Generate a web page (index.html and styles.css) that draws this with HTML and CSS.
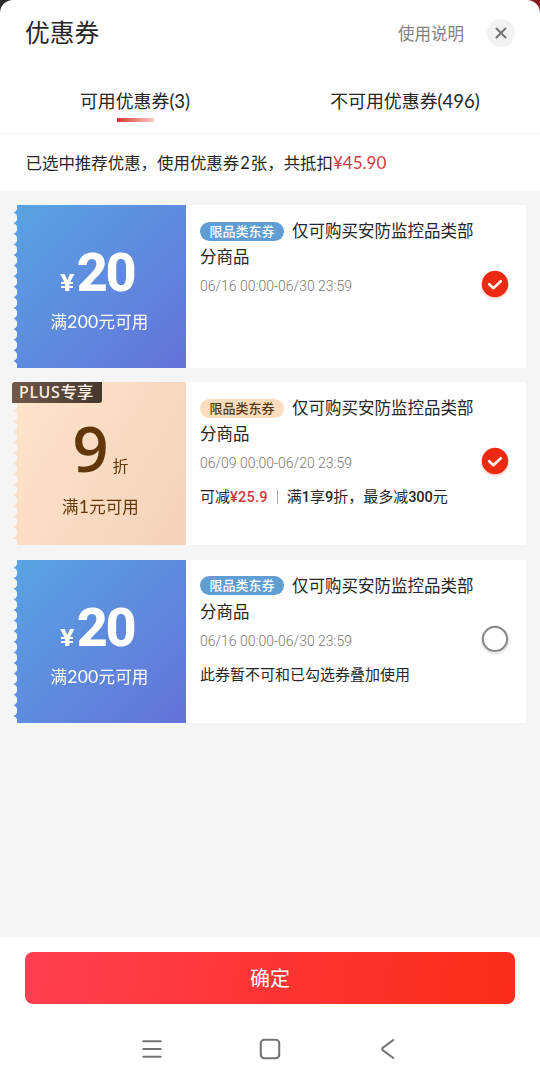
FILE: index.html
```html
<!DOCTYPE html>
<html lang="zh-CN">
<head>
<meta charset="utf-8">
<title>优惠券</title>
<link rel="stylesheet" href="styles.css">
</head>
<body>
<div class="sheet">
  <header class="header">
    <h1 class="title">优惠券</h1>
    <span class="help">使用说明</span>
    <svg class="close" width="28" height="28" viewBox="0 0 28 28"><circle cx="14" cy="14" r="14" fill="#f2f2f2"/><path d="M9.5 9.5l9 9M18.5 9.5l-9 9" stroke="#777" stroke-width="2.1" stroke-linecap="round"/></svg>
  </header>
  <nav class="tabs">
    <div class="tab active"><span>可用优惠券<b class="num">(3)</b></span></div>
    <div class="tab other"><span>不可用优惠券<b class="num">(496)</b></span></div>
  </nav>
  <p class="summary">已选中推荐优惠，使用优惠券<span class="count">2</span>张，共抵扣<span class="saved">¥45.90</span></p>
  <main class="list">
    <article class="card">
      <div class="face blue">
        <div class="amount"><span class="yen">¥</span><span class="value">20</span></div>
        <div class="cond">满<span class="n">200</span>元可用</div>
      </div>
      <div class="info">
        <div class="name"><span class="tag">限品类东券</span>仅可购买安防监控品类部<br>分商品</div>
        <div class="date">06/16 00:00-06/30 23:59</div>
      </div>
      <svg class="check" width="34" height="36" viewBox="0 0 34 36"><circle cx="17" cy="18.5" r="14" fill="#ffe1db"/><circle cx="17" cy="17" r="13.2" fill="#ec2a12"/><path d="M11.2 17.2l4.2 4 7.4-7" fill="none" stroke="#fff1e8" stroke-width="2.7" stroke-linecap="round" stroke-linejoin="round"/></svg>
    </article>
    <article class="card">
      <div class="face gold">
        <div class="amount"><span class="value">9</span><span class="unit">折</span></div>
        <div class="cond">满<span class="n">1</span>元可用</div>
      </div>
      <div class="plus"><span>PLUS</span>专享</div>
      <div class="info">
        <div class="name"><span class="tag tag-gold">限品类东券</span>仅可购买安防监控品类部<br>分商品</div>
        <div class="date">06/09 00:00-06/20 23:59</div>
        <div class="note">可减<b class="red">¥25.9</b><i class="bar"></i>满<b>1</b>享<b>9</b>折，最多减<b>300</b>元</div>
      </div>
      <svg class="check" width="34" height="36" viewBox="0 0 34 36"><circle cx="17" cy="18.5" r="14" fill="#ffe1db"/><circle cx="17" cy="17" r="13.2" fill="#ec2a12"/><path d="M11.2 17.2l4.2 4 7.4-7" fill="none" stroke="#fff1e8" stroke-width="2.7" stroke-linecap="round" stroke-linejoin="round"/></svg>
    </article>
    <article class="card">
      <div class="face blue">
        <div class="amount"><span class="yen">¥</span><span class="value">20</span></div>
        <div class="cond">满<span class="n">200</span>元可用</div>
      </div>
      <div class="info">
        <div class="name"><span class="tag">限品类东券</span>仅可购买安防监控品类部<br>分商品</div>
        <div class="date">06/16 00:00-06/30 23:59</div>
        <div class="note">此券暂不可和已勾选券叠加使用</div>
      </div>
      <svg class="check" width="34" height="36" viewBox="0 0 34 36"><circle cx="17" cy="18.5" r="13.2" fill="none" stroke="#e9e9e9" stroke-width="2"/><circle cx="17" cy="17" r="12.1" fill="#fff" stroke="#8a8a8a" stroke-width="2.1"/></svg>
    </article>
  </main>
  <footer class="footer">
    <button class="confirm">确定</button>
    <div class="sysnav">
      <svg width="22" height="22" viewBox="0 0 22 22"><path d="M2.3 3.2h17.4M2.3 11h17.4M2.3 18.7h17.4"/></svg>
      <svg width="22" height="22" viewBox="0 0 22 22"><rect x="1.8" y="1.8" width="18.4" height="18.4" rx="3.5"/></svg>
      <svg width="22" height="22" viewBox="0 0 22 22"><path d="M16.3 2L6 9.6Q4.4 11 6 12.4L16.3 20"/></svg>
    </div>
  </footer>
</div>
</body>
</html>
```
FILE: styles.css
```css
* { box-sizing: border-box; }
body {
  margin: 0;
  background: linear-gradient(90deg, #2b2b2d 0 50%, #851a20 50%);
  font-family: Lato, "Noto Sans CJK SC", sans-serif;
  color: #262626;
}
.sheet {
  width: 540px;
  height: 1083px;
  display: flex;
  flex-direction: column;
  background: #fff;
  border-radius: 13px 13px 0 0;
  overflow: hidden;
  white-space: nowrap;
}
.header {
  height: 68px;
  padding: 0 25px 2px 25px;
  display: flex;
  align-items: center;
}
.title { margin: 0; font-size: 24.7px; line-height: 36px; font-weight: 400; }
.help { margin-left: auto; margin-right: 23px; font-size: 16.5px; color: #828282; }
.close { display: block; }
.tabs {
  height: 66px;
  display: grid;
  grid-template-columns: 1fr 1fr;
  border-bottom: 1px solid #f8f8f8;
  font-size: 17.9px;
  line-height: 26px;
  text-align: center;
}
.tab { padding-top: 20px; }
.num { font-weight: 400; font-size: 18.6px; }
.active::after {
  content: "";
  display: block;
  width: 37px;
  height: 4px;
  margin: 4px auto 0;
  background: linear-gradient(90deg, #dc3328, #f6cdc8);
}
.summary {
  margin: 0;
  height: 57px;
  padding: 0 25.5px;
  font-size: 16.45px;
  line-height: 57px;
}
.count { padding: 0 1px; }
.saved { color: #cf3a40; font-size: 17px; }
.list {
  flex: none;
  height: 746px;
  padding: 14px 14px 0 13px;
  background: #f5f5f5;
  display: flex;
  flex-direction: column;
  gap: 14.4px;
}
.card {
  position: relative;
  flex: none;
  height: 163px;
  display: flex;
  background: linear-gradient(90deg, transparent 173px, #fff 173px);
}
.face {
  width: 172px;
  margin-left: 1px;
  display: flex;
  flex-direction: column;
  align-items: center;
  -webkit-mask: radial-gradient(3.2px 4.8px at 0 50%, transparent 90%, #000 105%) 0 -3px / 100% 10.6px repeat-y;
  mask: radial-gradient(3.2px 4.8px at 0 50%, transparent 90%, #000 105%) 0 -3px / 100% 10.6px repeat-y;
}
.blue { background: linear-gradient(135deg, #58a4e2, #6572d9); color: #fff; }
.gold { background: linear-gradient(120deg, #fde5cc, #f4d1b9); color: #623708; }
.amount { display: flex; align-items: baseline; }
.blue .amount { padding-top: 38px; margin-left: -5px; }
.yen { font: 800 24px/60px Roboto, sans-serif; width: 16px; transform: scaleX(1.12); }
.value { font-weight: 700; font-size: 54px; line-height: 60px; }
.blue .value { font-family: Roboto, sans-serif; font-weight: 800; letter-spacing: -2.5px; }
.gold .amount { height: 100px; padding-top: 36px; margin-left: 1px; }
.gold .value { font: 600 63px/60px "Open Sans", sans-serif; }
.unit { font-size: 16px; line-height: 20px; margin-left: 4px; }
.cond { font-size: 16.5px; line-height: 24px; letter-spacing: .1px; }
.blue .cond { margin-top: -3px; margin-left: -1px; }
.cond .n { font-size: 17.5px; letter-spacing: .3px; }
.gold .cond { margin-top: 13px; margin-left: 1px; }
.plus {
  position: absolute;
  left: -1px;
  top: 0;
  width: 90px;
  height: 21px;
  padding-left: 7px;
  border-radius: 3px 0 3px 0;
  background: linear-gradient(90deg, #70594a, #45372e);
  color: #fff0e3;
  font-size: 16.4px;
  font-weight: 500;
  line-height: 20px;
}
.plus span { font: 500 16px/20px "Noto Sans", sans-serif; letter-spacing: .7px; }
.info { width: 290px; padding: 13px 0 0 14px; }
.name { font-size: 16.5px; line-height: 26px; }
.tag {
  display: inline-block;
  width: 84px;
  height: 19px;
  margin-right: 8px;
  border-radius: 10px;
  background: #5f9dd3;
  color: #fff;
  font-size: 13px;
  font-weight: 500;
  line-height: 18px;
  text-align: center;
  vertical-align: 1.5px;
}
.tag-gold { background: #fbdcbc; color: #573812; }
.date {
  margin-top: 6px;
  font: 300 14px/20px Roboto, sans-serif;
  color: #777;
}
.note { margin-top: 12px; font-size: 15px; line-height: 22px; }
.note b { font: 500 14.6px/22px Roboto, sans-serif; letter-spacing: -.1px; }
.note .red { color: #cf3a40; letter-spacing: .2px; }
.bar {
  display: inline-block;
  width: 1px;
  height: 14px;
  margin: 0 9px;
  background: #aaa;
  vertical-align: -2px;
}
.check { display: block; margin: 62px 0 0 2px; }
.footer { flex: 1; padding: 15px 25px 0; background: #fff; }
.confirm {
  display: block;
  width: 490px;
  height: 52px;
  padding: 0;
  border: 0;
  border-radius: 8px;
  background: linear-gradient(100deg, #ff4052, #fe3434 50%, #f92d18);
  color: #fff;
  font: 400 20px/53px Lato, "Noto Sans CJK SC", sans-serif;
}
.sysnav {
  display: flex;
  justify-content: center;
  gap: 96px;
  padding: 34px 1px 0 0;
}
.sysnav svg { display: block; fill: none; stroke: #747474; stroke-width: 2.1; stroke-linecap: round; stroke-linejoin: round; }
```
